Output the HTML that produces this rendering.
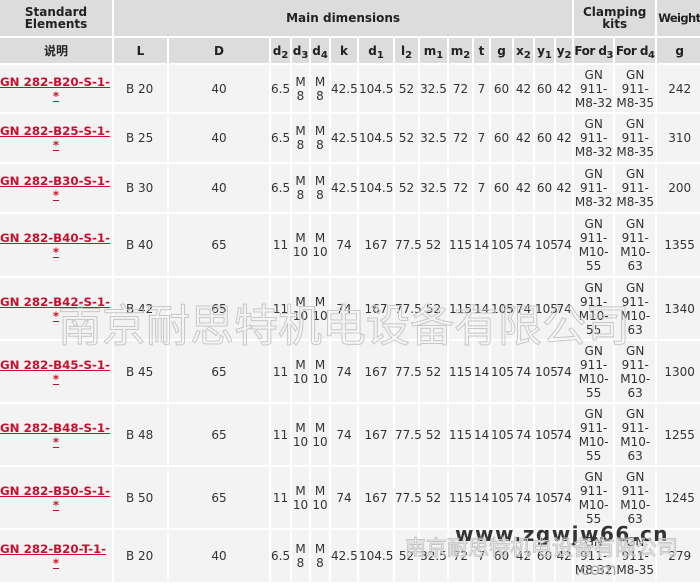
<!DOCTYPE html>
<html><head><meta charset="utf-8"><style>
body{margin:0;width:700px;height:578px;overflow:hidden;background:#fff;position:relative;font-family:"DejaVu Sans","Noto Sans CJK SC",sans-serif;font-size:12px;color:#333}
table{position:absolute;left:-2px;top:-2px;width:706px;border-collapse:separate;border-spacing:2px;table-layout:fixed}
td{background:#f3f3f3;padding:0;text-align:center;vertical-align:middle;white-space:nowrap;line-height:14px;overflow:visible}
tr.h td{background:#dcdcdc;font-weight:bold;color:#222}
td.n a{color:#c8102e;text-decoration:underline;font-weight:bold;font-size:11.8px;display:block;text-align:left;line-height:14px}
td.n a span{display:block;text-align:center}
td.l{text-align:left;padding-left:12px}
sub{font-size:10px;vertical-align:-3px;line-height:0}
.wm{position:absolute;color:transparent;-webkit-text-stroke:1px #c8c8c8;font-family:"Noto Sans CJK SC",sans-serif;white-space:nowrap}
</style></head><body>
<table>
<colgroup><col style="width:112px"><col style="width:53px"><col style="width:100px"><col style="width:19px"><col style="width:17px"><col style="width:18px"><col style="width:26px"><col style="width:34px"><col style="width:23px"><col style="width:27px"><col style="width:23px"><col style="width:15px"><col style="width:21px"><col style="width:19px"><col style="width:19px"><col style="width:16px"><col style="width:39px"><col style="width:40px"><col style="width:45px"></colgroup>
<tr class="h" style="height:36px"><td style="font-size:12px;line-height:12px">Standard<br>Elements</td><td colspan="15">Main dimensions</td><td colspan="2" style="line-height:12px">Clamping<br>kits</td><td style="font-size:11.5px;letter-spacing:-0.6px;text-align:left;padding-left:1px">Weight</td></tr>
<tr class="h" style="height:25px"><td style="font-family:'Noto Sans CJK SC',sans-serif">说明</td><td>L</td><td>D</td><td>d<sub>2</sub></td><td>d<sub>3</sub></td><td>d<sub>4</sub></td><td>k</td><td>d<sub>1</sub></td><td>l<sub>2</sub></td><td>m<sub>1</sub></td><td>m<sub>2</sub></td><td>t</td><td>g</td><td>x<sub>2</sub></td><td>y<sub>1</sub></td><td>y<sub>2</sub></td><td style="letter-spacing:-0.5px">For d<sub>3</sub></td><td style="letter-spacing:-0.5px">For d<sub>4</sub></td><td>g</td></tr>
<tr style="height:47px"><td class="n"><a>GN 282-B20-S-1-<span>*</span></a></td><td class="l">B 20</td><td>40</td><td>6.5</td><td>M<br>8</td><td>M<br>8</td><td>42.5</td><td>104.5</td><td>52</td><td>32.5</td><td>72</td><td>7</td><td>60</td><td>42</td><td>60</td><td>42</td><td>GN<br>911-<br>M8-32</td><td>GN<br>911-<br>M8-35</td><td>242</td></tr>
<tr style="height:48px"><td class="n"><a>GN 282-B25-S-1-<span>*</span></a></td><td class="l">B 25</td><td>40</td><td>6.5</td><td>M<br>8</td><td>M<br>8</td><td>42.5</td><td>104.5</td><td>52</td><td>32.5</td><td>72</td><td>7</td><td>60</td><td>42</td><td>60</td><td>42</td><td>GN<br>911-<br>M8-32</td><td>GN<br>911-<br>M8-35</td><td>310</td></tr>
<tr style="height:48px"><td class="n"><a>GN 282-B30-S-1-<span>*</span></a></td><td class="l">B 30</td><td>40</td><td>6.5</td><td>M<br>8</td><td>M<br>8</td><td>42.5</td><td>104.5</td><td>52</td><td>32.5</td><td>72</td><td>7</td><td>60</td><td>42</td><td>60</td><td>42</td><td>GN<br>911-<br>M8-32</td><td>GN<br>911-<br>M8-35</td><td>200</td></tr>
<tr style="height:62px"><td class="n"><a>GN 282-B40-S-1-<span>*</span></a></td><td class="l">B 40</td><td>65</td><td>11</td><td>M<br>10</td><td>M<br>10</td><td>74</td><td>167</td><td>77.5</td><td>52</td><td>115</td><td>14</td><td>105</td><td>74</td><td>105</td><td>74</td><td>GN<br>911-<br>M10-<br>55</td><td>GN<br>911-<br>M10-<br>63</td><td>1355</td></tr>
<tr style="height:61px"><td class="n"><a>GN 282-B42-S-1-<span>*</span></a></td><td class="l">B 42</td><td>65</td><td>11</td><td>M<br>10</td><td>M<br>10</td><td>74</td><td>167</td><td>77.5</td><td>52</td><td>115</td><td>14</td><td>105</td><td>74</td><td>105</td><td>74</td><td>GN<br>911-<br>M10-<br>55</td><td>GN<br>911-<br>M10-<br>63</td><td>1340</td></tr>
<tr style="height:61px"><td class="n"><a>GN 282-B45-S-1-<span>*</span></a></td><td class="l">B 45</td><td>65</td><td>11</td><td>M<br>10</td><td>M<br>10</td><td>74</td><td>167</td><td>77.5</td><td>52</td><td>115</td><td>14</td><td>105</td><td>74</td><td>105</td><td>74</td><td>GN<br>911-<br>M10-<br>55</td><td>GN<br>911-<br>M10-<br>63</td><td>1300</td></tr>
<tr style="height:61px"><td class="n"><a>GN 282-B48-S-1-<span>*</span></a></td><td class="l">B 48</td><td>65</td><td>11</td><td>M<br>10</td><td>M<br>10</td><td>74</td><td>167</td><td>77.5</td><td>52</td><td>115</td><td>14</td><td>105</td><td>74</td><td>105</td><td>74</td><td>GN<br>911-<br>M10-<br>55</td><td>GN<br>911-<br>M10-<br>63</td><td>1255</td></tr>
<tr style="height:61px"><td class="n"><a>GN 282-B50-S-1-<span>*</span></a></td><td class="l">B 50</td><td>65</td><td>11</td><td>M<br>10</td><td>M<br>10</td><td>74</td><td>167</td><td>77.5</td><td>52</td><td>115</td><td>14</td><td>105</td><td>74</td><td>105</td><td>74</td><td>GN<br>911-<br>M10-<br>55</td><td>GN<br>911-<br>M10-<br>63</td><td>1245</td></tr>
<tr style="height:52px"><td class="n"><a>GN 282-B20-T-1-<span>*</span></a></td><td class="l">B 20</td><td>40</td><td>6.5</td><td>M<br>8</td><td>M<br>8</td><td>42.5</td><td>104.5</td><td>52</td><td>32.5</td><td>72</td><td>7</td><td>60</td><td>42</td><td>60</td><td>42</td><td>GN<br>911-<br>M8-32</td><td>GN<br>911-<br>M8-35</td><td>279</td></tr>
</table>
<div class="wm" style="left:58px;top:290px;font-size:44px">南京耐思特机电设备有限公司</div>
<div style="position:absolute;left:455px;top:522px;font-size:20px;font-weight:bold;color:#333;letter-spacing:1.5px;font-family:'DejaVu Sans',sans-serif">www.zgwjw66.cn</div>
<div class="wm" style="left:405px;top:532px;font-size:21px">南京耐思特机电设备有限公司</div>
<div style="position:absolute;left:575px;top:560px;font-size:17px;color:#aaa">.com</div>
</body></html>
